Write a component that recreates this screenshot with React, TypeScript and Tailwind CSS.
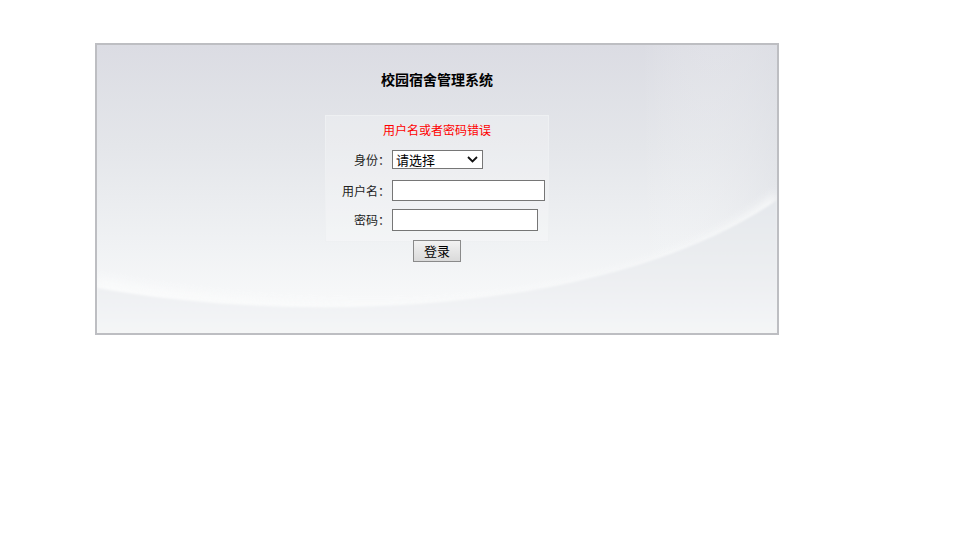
import React from "react";

const font = { fontFamily: '"Noto Sans CJK SC", "Liberation Sans", sans-serif' };

function Background() {
  return (
    <svg
      className="absolute inset-0 h-full w-full"
      viewBox="0 0 680 288"
      preserveAspectRatio="none"
      aria-hidden="true"
    >
      <defs>
        <linearGradient id="top" x1="0" y1="0" x2="0" y2="1">
          <stop offset="0" stopColor="#dbdce3" />
          <stop offset="0.35" stopColor="#e4e6ea" />
          <stop offset="0.7" stopColor="#f0f2f4" />
          <stop offset="0.88" stopColor="#f7f8f9" />
          <stop offset="1" stopColor="#f8f9fa" />
        </linearGradient>
        <linearGradient id="side" x1="0" y1="0" x2="1" y2="0">
          <stop offset="0" stopColor="#ffffff" stopOpacity="0" />
          <stop offset="0.8" stopColor="#ffffff" stopOpacity="0" />
          <stop offset="1" stopColor="#dfe1e6" stopOpacity="0.5" />
        </linearGradient>
        <linearGradient id="low" x1="0" y1="0" x2="0" y2="1">
          <stop offset="0" stopColor="#e5e8ec" />
          <stop offset="0.5" stopColor="#eceef1" />
          <stop offset="1" stopColor="#f6f7f8" />
        </linearGradient>
        <filter id="soft" x="-10%" y="-10%" width="120%" height="120%">
          <feGaussianBlur stdDeviation="5" />
        </filter>
        <filter id="edge" x="-10%" y="-10%" width="120%" height="120%">
          <feGaussianBlur stdDeviation="1.2" />
        </filter>
      </defs>
      <rect x="0" y="0" width="680" height="288" fill="url(#top)" />
      <rect x="0" y="0" width="680" height="288" fill="url(#side)" />
      <path
        d="M0,232 C150,262 330,268 450,243 C560,222 630,188 680,146 L680,288 L0,288 Z"
        fill="#fbfcfc"
        opacity="0.8"
        filter="url(#soft)"
      />
      <path
        d="M0,243 C220,282 520,266 680,155 L680,300 L0,300 Z"
        fill="url(#low)"
        filter="url(#edge)"
      />
    </svg>
  );
}

function Field({ label, children }: { label: string; children: React.ReactNode }) {
  return (
    <div className="flex items-center">
      <div className="w-[64px] shrink-0 text-right text-[12px] leading-none text-[#222]">{label}</div>
      <div className="ml-[2px] flex items-center">{children}</div>
    </div>
  );
}

export default function App() {
  return (
    <div className="min-h-[534px] w-full bg-white pl-[95px] pt-[43px]" style={font}>
      <div className="relative h-[292px] w-[684px] overflow-hidden border-2 border-[#bdbec2]">
        <Background />
        <div className="relative flex flex-col items-center">
          <div className="mt-[24px] h-[20px] text-[14px] font-bold leading-[20px] text-black">
            校园宿舍管理系统
          </div>
          <div className="mt-[26px] w-[224px] border border-[#eef0f2] bg-white/25 pb-[10px] pt-[5px]">
            <div className="h-[18px] text-center text-[12px] leading-[18px] text-[#ff0000]">
              用户名或者密码错误
            </div>
            <div className="mt-[11px]">
              <Field label="身份：">
                <div
                  role="combobox"
                  aria-expanded="false"
                  className="flex h-[19px] w-[91px] items-center justify-between border border-[#767676] bg-white pl-[3px] pr-[4px]"
                >
                  <span className="text-[13px] leading-[17px] text-black">请选择</span>
                  <svg className="h-[9px] w-[11px]" viewBox="0 0 11 9">
                    <path d="M1,2 L5.5,6.5 L10,2" fill="none" stroke="#111" strokeWidth="1.8" />
                  </svg>
                </div>
              </Field>
            </div>
            <div className="mt-[11px]">
              <Field label="用户名：">
                <input
                  type="text"
                  className="h-[21px] w-[153px] border border-[#767676] bg-white px-[2px] text-[13px] outline-none"
                />
              </Field>
            </div>
            <div className="mt-[8px]">
              <Field label="密码：">
                <input
                  type="password"
                  className="h-[22px] w-[146px] border border-[#767676] bg-white px-[2px] text-[13px] outline-none"
                />
              </Field>
            </div>
          </div>
          <button
            className="-mt-[2px] h-[22px] w-[48px] border border-[#8a8a8a] bg-gradient-to-b from-[#f2f2f2] to-[#dadada] text-[13px] leading-[20px] text-black"
            style={font}
          >
            登录
          </button>
        </div>
      </div>
    </div>
  );
}
